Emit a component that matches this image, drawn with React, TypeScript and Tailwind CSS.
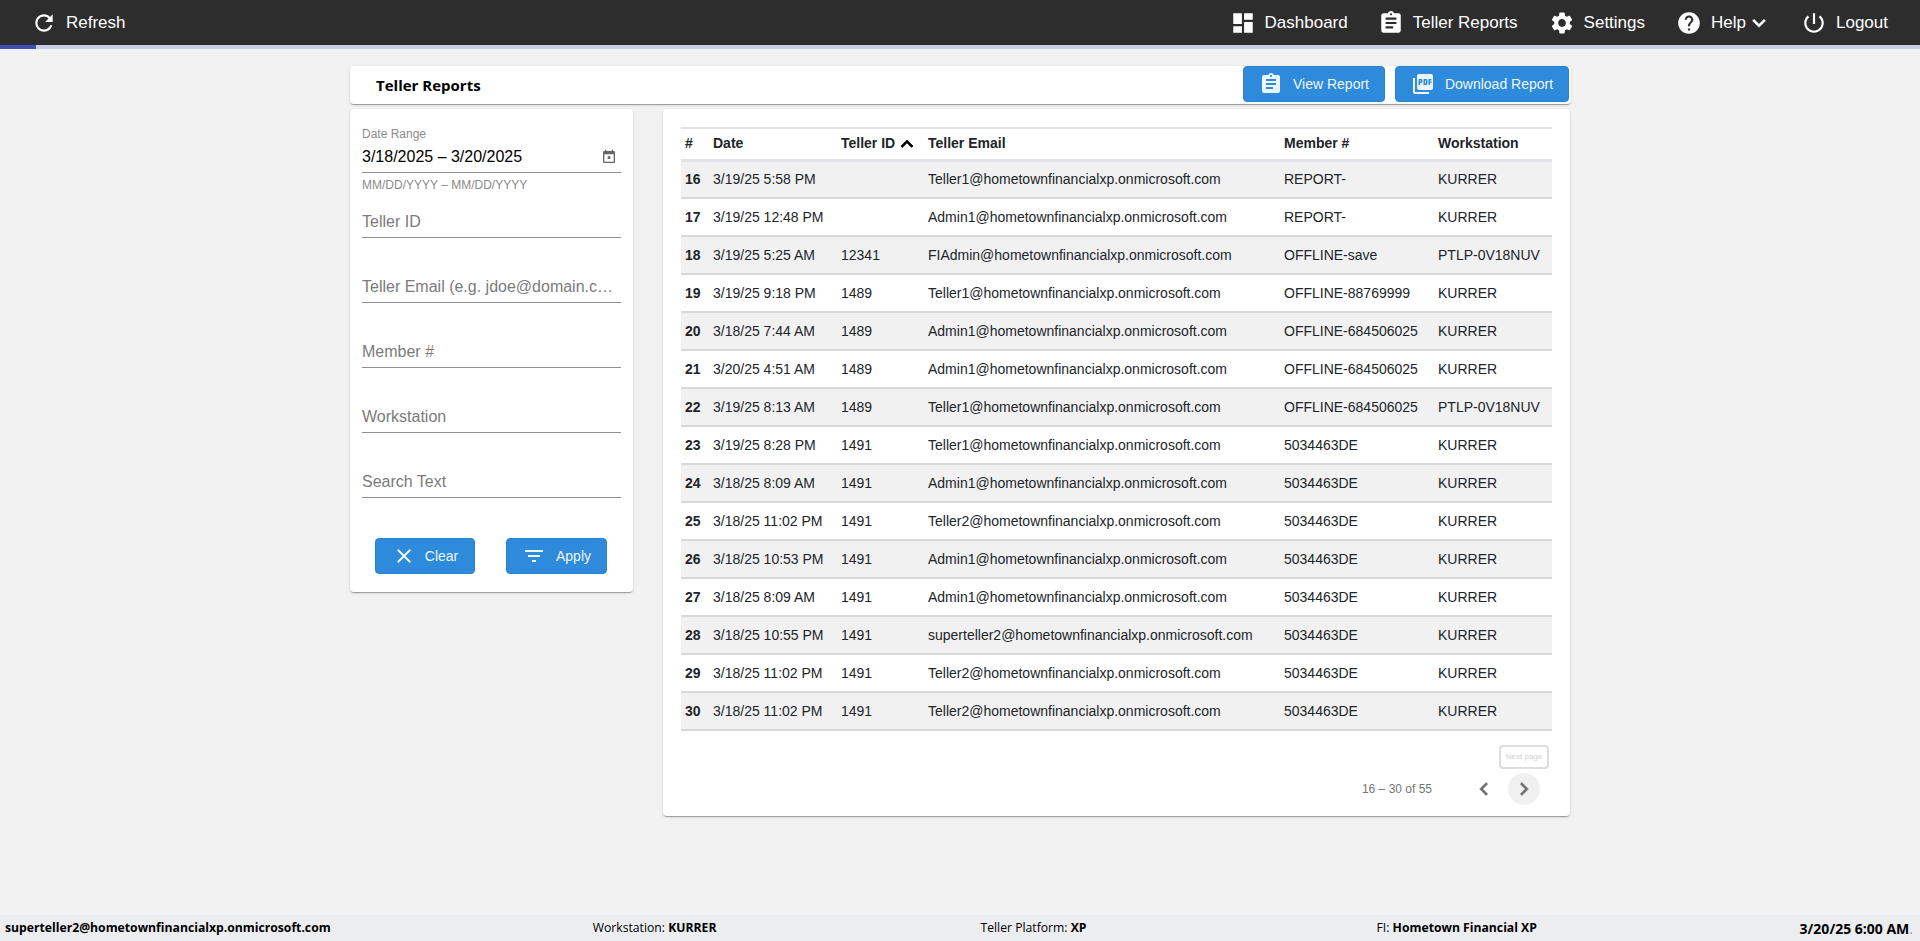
const paths = {
  refresh: 'M17.65 6.35C16.2 4.9 14.21 4 12 4c-4.42 0-7.99 3.58-7.99 8s3.57 8 7.99 8c3.73 0 6.84-2.55 7.73-6h-2.08c-.82 2.33-3.04 4-5.65 4-3.31 0-6-2.69-6-6s2.69-6 6-6c1.66 0 3.14.69 4.22 1.78L13 11h7V4l-2.35 2.35z',
  dashboard: 'M3 13h8V3H3v10zm0 8h8v-6H3v6zm10 0h8V11h-8v10zm0-18v6h8V3h-8z',
  assignment: 'M19 3h-4.18C14.4 1.84 13.3 1 12 1c-1.3 0-2.4.84-2.82 2H5c-1.1 0-2 .9-2 2v14c0 1.1.9 2 2 2h14c1.1 0 2-.9 2-2V5c0-1.1-.9-2-2-2zm-7 0c.55 0 1 .45 1 1s-.45 1-1 1-1-.45-1-1 .45-1 1-1zm2 14H7v-2h7v2zm3-4H7v-2h10v2zm0-4H7V7h10v2z',
  settings: 'M19.14 12.94c.04-.3.06-.61.06-.94 0-.32-.02-.64-.07-.94l2.03-1.58c.18-.14.23-.41.12-.61l-1.92-3.32c-.12-.22-.37-.29-.59-.22l-2.39.96c-.5-.38-1.03-.7-1.62-.94l-.36-2.54c-.04-.24-.24-.41-.48-.41h-3.84c-.24 0-.43.17-.47.41l-.36 2.54c-.59.24-1.13.57-1.62.94l-2.39-.96c-.22-.08-.47 0-.59.22L2.74 8.87c-.12.21-.08.47.12.61l2.03 1.58c-.05.3-.09.63-.09.94s.02.64.07.94l-2.03 1.58c-.18.14-.23.41-.12.61l1.92 3.32c.12.22.37.29.59.22l2.39-.96c.5.38 1.03.7 1.62.94l.36 2.54c.05.24.24.41.48.41h3.84c.24 0 .44-.17.47-.41l.36-2.54c.59-.24 1.13-.56 1.62-.94l2.39.96c.22.08.47 0 .59-.22l1.92-3.32c.12-.22.07-.47-.12-.61l-2.01-1.58zM12 15.6c-1.98 0-3.6-1.62-3.6-3.6s1.62-3.6 3.6-3.6 3.6 1.62 3.6 3.6-1.62 3.6-3.6 3.6z',
  help: 'M12 2C6.48 2 2 6.48 2 12s4.48 10 10 10 10-4.48 10-10S17.52 2 12 2zm1 17h-2v-2h2v2zm2.07-7.75l-.9.92C13.45 12.9 13 13.5 13 15h-2v-.5c0-1.1.45-2.1 1.17-2.83l1.24-1.26c.37-.36.59-.86.59-1.41 0-1.1-.9-2-2-2s-2 .9-2 2H8c0-2.21 1.79-4 4-4s4 1.79 4 4c0 .88-.36 1.68-.93 2.25z',
  power: 'M13 3h-2v10h2V3zm4.83 2.17l-1.42 1.42C17.99 7.86 19 9.81 19 12c0 3.87-3.13 7-7 7s-7-3.13-7-7c0-2.19 1.01-4.14 2.58-5.42L6.17 5.17C4.23 6.82 3 9.26 3 12c0 4.97 4.03 9 9 9s9-4.03 9-9c0-2.74-1.23-5.18-3.17-6.83z',
  pdf: 'M20 2H8c-1.1 0-2 .9-2 2v12c0 1.1.9 2 2 2h12c1.1 0 2-.9 2-2V4c0-1.1-.9-2-2-2zm-8.5 7.5c0 .83-.67 1.5-1.5 1.5H9v2H7.5V7H10c.83 0 1.5.67 1.5 1.5v1zm5 2c0 .83-.67 1.5-1.5 1.5h-2.5V7H15c.83 0 1.5.67 1.5 1.5v3zm4-3H19v1h1.5V11H19v2h-1.5V7h3v1.5zM9 9.5h1v-1H9v1zM4 6H2v14c0 1.1.9 2 2 2h14v-2H4V6zm10 5.5h1v-3h-1v3z',
  today: 'M19 3h-1V1h-2v2H8V1H6v2H5c-1.11 0-1.99.9-1.99 2L3 19c0 1.1.89 2 2 2h14c1.1 0 2-.9 2-2V5c0-1.1-.9-2-2-2zm0 16H5V8h14v11zM10 11h4v4h-4z',
  close: 'M19 6.41L17.59 5 12 10.59 6.41 5 5 6.41 10.59 12 5 17.59 6.41 19 12 13.41 17.59 19 19 17.59 13.41 12z',
  filter: 'M10 18h4v-2h-4v2zM3 6v2h18V6H3zm3 7h12v-2H6v2z',
  down: 'M7.41 8.59L12 13.17l4.59-4.58L18 10l-6 6-6-6z',
  up: 'M7.41 15.41L12 10.83l4.59 4.58L18 14l-6-6-6 6z',
  left: 'M15.41 7.41L14 6l-6 6 6 6 1.41-1.41L10.83 12z',
  right: 'M10 6L8.59 7.41 13.17 12l-4.58 4.59L10 18l6-6z',
};

function Icon({ name, className }: { name: keyof typeof paths; className?: string }) {
  return (
    <svg viewBox="0 0 24 24" fill="currentColor" className={className ?? 'w-6 h-6 shrink-0'}>
      <path d={paths[name]} />
    </svg>
  );
}

const rows = [
  ['16', '3/19/25 5:58 PM', '', 'Teller1@hometownfinancialxp.onmicrosoft.com', 'REPORT-', 'KURRER'],
  ['17', '3/19/25 12:48 PM', '', 'Admin1@hometownfinancialxp.onmicrosoft.com', 'REPORT-', 'KURRER'],
  ['18', '3/19/25 5:25 AM', '12341', 'FIAdmin@hometownfinancialxp.onmicrosoft.com', 'OFFLINE-save', 'PTLP-0V18NUV'],
  ['19', '3/19/25 9:18 PM', '1489', 'Teller1@hometownfinancialxp.onmicrosoft.com', 'OFFLINE-88769999', 'KURRER'],
  ['20', '3/18/25 7:44 AM', '1489', 'Admin1@hometownfinancialxp.onmicrosoft.com', 'OFFLINE-684506025', 'KURRER'],
  ['21', '3/20/25 4:51 AM', '1489', 'Admin1@hometownfinancialxp.onmicrosoft.com', 'OFFLINE-684506025', 'KURRER'],
  ['22', '3/19/25 8:13 AM', '1489', 'Teller1@hometownfinancialxp.onmicrosoft.com', 'OFFLINE-684506025', 'PTLP-0V18NUV'],
  ['23', '3/19/25 8:28 PM', '1491', 'Teller1@hometownfinancialxp.onmicrosoft.com', '5034463DE', 'KURRER'],
  ['24', '3/18/25 8:09 AM', '1491', 'Admin1@hometownfinancialxp.onmicrosoft.com', '5034463DE', 'KURRER'],
  ['25', '3/18/25 11:02 PM', '1491', 'Teller2@hometownfinancialxp.onmicrosoft.com', '5034463DE', 'KURRER'],
  ['26', '3/18/25 10:53 PM', '1491', 'Admin1@hometownfinancialxp.onmicrosoft.com', '5034463DE', 'KURRER'],
  ['27', '3/18/25 8:09 AM', '1491', 'Admin1@hometownfinancialxp.onmicrosoft.com', '5034463DE', 'KURRER'],
  ['28', '3/18/25 10:55 PM', '1491', 'superteller2@hometownfinancialxp.onmicrosoft.com', '5034463DE', 'KURRER'],
  ['29', '3/18/25 11:02 PM', '1491', 'Teller2@hometownfinancialxp.onmicrosoft.com', '5034463DE', 'KURRER'],
  ['30', '3/18/25 11:02 PM', '1491', 'Teller2@hometownfinancialxp.onmicrosoft.com', '5034463DE', 'KURRER'],
];

const cardShadow = 'shadow-[0_2px_1px_-1px_rgba(0,0,0,0.2),0_1px_1px_0_rgba(0,0,0,0.14),0_1px_3px_0_rgba(0,0,0,0.12)]';

function NavItem({ icon, label, chevron, className }: { icon: keyof typeof paths; label: string; chevron?: boolean; className?: string }) {
  return (
    <div className={`flex items-center gap-[9px] px-[15px] ${className ?? ''}`}>
      <Icon name={icon} className="w-[26px] h-[26px] shrink-0" />
      <span>{label}</span>
      {chevron && <Icon name="down" className="w-[26px] h-[26px] -ml-[9px] -mr-[1px] stroke-current stroke-[0.5]" />}
    </div>
  );
}

function ActionButton({ icon, label, className }: { icon: keyof typeof paths; label: string; className: string }) {
  return (
    <button className={`flex items-center justify-center h-9 rounded bg-[#2e8ada] border border-[#2a80cc] text-[14px] text-[#eef6fd] ${className}`}>
      <Icon name={icon} />
      <span>{label}</span>
    </button>
  );
}

function Field({ placeholder, className }: { placeholder: string; className?: string }) {
  return (
    <input
      placeholder={placeholder}
      readOnly
      className={`block w-full h-[33px] pt-[2px] border-b border-[#8f8f8f] text-[16px] text-ellipsis outline-none placeholder:text-[#7b7b7b] ${className ?? 'mt-8'}`}
    />
  );
}

export default function App() {
  return (
    <div className="flex flex-col h-[941px] bg-[#f2f2f2] font-['Liberation_Sans',Arial,sans-serif] overflow-hidden">
      <header className="flex items-center justify-between h-[45px] bg-[#2d2d2d] text-white text-[17px]">
        <div className="flex items-center gap-[9px] pl-[31px]">
          <Icon name="refresh" className="w-[26px] h-[26px] shrink-0" />
          <span>Refresh</span>
        </div>
        <nav className="flex items-center pr-[17px]">
          <NavItem icon="dashboard" label="Dashboard" />
          <NavItem icon="assignment" label="Teller Reports" />
          <NavItem icon="settings" label="Settings" className="ml-px" />
          <NavItem icon="help" label="Help" chevron className="ml-px" />
          <NavItem icon="power" label="Logout" />
        </nav>
      </header>
      <div className="h-1 bg-[#c9cde8]">
        <div className="h-1 w-[36px] bg-[#3f51b5]" />
      </div>

      <main className="flex-1 ml-[350px] w-[1221px]">
        <div className={`flex items-start justify-between h-[38px] mt-[17px] bg-white rounded pr-[2px] ${cardShadow}`}>
          <h1 className="pl-[26px] h-[38px] leading-[38px] text-[15px] font-bold text-black font-['Open_Sans',sans-serif]">Teller Reports</h1>
          <div className="flex gap-[10px]">
            <ActionButton icon="assignment" label="View Report" className="w-[142px] gap-[10px]" />
            <ActionButton icon="pdf" label="Download Report" className="w-[174px] gap-[10px]" />
          </div>
        </div>

        <div className="flex gap-[30px] mt-[5px] items-start">
          <aside className={`w-[283px] bg-white rounded pl-3 pr-3 pt-[18px] pb-[18px] ${cardShadow}`}>
            <div className="text-[12px] leading-[14px] text-[#8a8a8a]">Date Range</div>
            <div className="flex items-center justify-between h-[32px] border-b border-[#8f8f8f] text-[16px] text-black">
              <span>3/18/2025 – 3/20/2025</span>
              <Icon name="today" className="w-4 h-4 mr-[4px] text-[#666]" />
            </div>
            <div className="mt-[5px] text-[12px] leading-[14px] text-[#8a8a8a]">MM/DD/YYYY – MM/DD/YYYY</div>
            <Field placeholder="Teller ID" className="mt-[13px]" />
            <Field placeholder="Teller Email (e.g. jdoe@domain.com)" />
            <Field placeholder="Member #" />
            <Field placeholder="Workstation" />
            <Field placeholder="Search Text" />
            <div className="flex justify-between pl-[13px] pr-[14px] mt-10">
              <ActionButton icon="close" label="Clear" className="w-[100px] gap-[9px]" />
              <ActionButton icon="filter" label="Apply" className="w-[101px] gap-[10px]" />
            </div>
          </aside>

          <section className={`w-[907px] bg-white rounded px-[18px] pt-[18px] pb-[11px] ${cardShadow}`}>
            <table className="w-full table-fixed border-collapse text-[14px] text-[#212529]">
              <colgroup>
                <col className="w-[28px]" />
                <col className="w-[128px]" />
                <col className="w-[87px]" />
                <col className="w-[356px]" />
                <col className="w-[154px]" />
                <col />
              </colgroup>
              <thead>
                <tr className="h-[32px] border-t-2 border-b-[3px] border-[#e1e3e8] text-left font-bold">
                  <th className="pl-1">#</th>
                  <th className="pl-1">Date</th>
                  <th className="pl-1">
                    <span className="flex items-center">
                      Teller ID
                      <Icon name="up" className="w-6 h-6 shrink-0 text-black stroke-current stroke-[0.75]" />
                    </span>
                  </th>
                  <th className="pl-1">Teller Email</th>
                  <th className="pl-1">Member #</th>
                  <th className="pl-1">Workstation</th>
                </tr>
              </thead>
              <tbody>
                {rows.map((r, i) => (
                  <tr key={r[0]} className={`h-[38px] border-b-2 border-[#d9d9d9] ${i % 2 === 0 ? 'bg-[#f1f1f1]' : 'bg-white'}`}>
                    <td className="pl-1 font-bold">{r[0]}</td>
                    <td className="pl-1">{r[1]}</td>
                    <td className="pl-1">{r[2]}</td>
                    <td className="pl-1">{r[3]}</td>
                    <td className="pl-1">{r[4]}</td>
                    <td className="pl-1">{r[5]}</td>
                  </tr>
                ))}
              </tbody>
            </table>

            <div className="flex justify-end mt-[14px] mr-[3px]">
              <div className="flex items-center justify-center w-[50px] h-6 bg-white border-2 border-[#dedede] rounded-sm text-[8px] text-[#d0d0d0]">
                Next page
              </div>
            </div>
            <div className="flex items-center justify-end gap-2 mt-1 pr-3 text-[#6e6e6e]">
              <span className="mr-7 text-[12px] text-[#757575]">16 – 30 of 55</span>
              <button className="flex items-center justify-center w-8 h-8 rounded-full">
                <Icon name="left" className="w-[26px] h-[26px] stroke-current stroke-[0.5]" />
              </button>
              <button className="flex items-center justify-center w-8 h-8 rounded-full bg-[#f0f0f0]">
                <Icon name="right" className="w-[26px] h-[26px] stroke-current stroke-[0.5]" />
              </button>
            </div>
          </section>
        </div>
      </main>

      <footer className="flex items-center h-[26px] pl-[5px] pr-[7px] bg-[#ebedef] text-[12.2px] text-black font-['Open_Sans',sans-serif]">
        <b>superteller2@hometownfinancialxp.onmicrosoft.com</b>
        <span className="ml-[262px]">Workstation: <b>KURRER</b></span>
        <span className="ml-[264px]">Teller Platform: <b>XP</b></span>
        <span className="ml-[290px]">FI: <b>Hometown Financial XP</b></span>
        <span className="ml-auto text-[14px]"><b>3/20/25 6:00 AM</b><span className="text-[#999]">.</span></span>
      </footer>
    </div>
  );
}
